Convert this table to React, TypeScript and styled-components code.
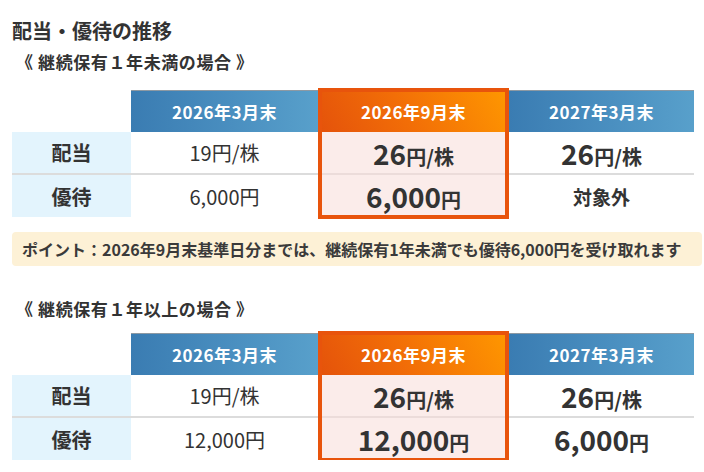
import React from "react";
import styled, { createGlobalStyle, css } from "styled-components";

const GlobalStyle = createGlobalStyle`
  html, body { margin: 0; padding: 0; background: #ffffff; }
  body {
    font-family: "Noto Sans CJK JP", "Noto Sans", sans-serif;
    color: #333333;
  }
`;

type Value =
  | { kind: "plain"; text: string }
  | { kind: "big"; num: string; unit: string }
  | { kind: "bold"; text: string };

interface Row {
  label: string;
  values: Value[];
}

interface Section {
  title: string;
  rows: Row[];
}

const HEADERS = ["2026年3月末", "2026年9月末", "2027年3月末"];
const HIGHLIGHT = 1;

const sections: Section[] = [
  {
    title: "《 継続保有１年未満の場合 》",
    rows: [
      {
        label: "配当",
        values: [
          { kind: "plain", text: "19円/株" },
          { kind: "big", num: "26", unit: "円/株" },
          { kind: "big", num: "26", unit: "円/株" },
        ],
      },
      {
        label: "優待",
        values: [
          { kind: "plain", text: "6,000円" },
          { kind: "big", num: "6,000", unit: "円" },
          { kind: "bold", text: "対象外" },
        ],
      },
    ],
  },
  {
    title: "《 継続保有１年以上の場合 》",
    rows: [
      {
        label: "配当",
        values: [
          { kind: "plain", text: "19円/株" },
          { kind: "big", num: "26", unit: "円/株" },
          { kind: "big", num: "26", unit: "円/株" },
        ],
      },
      {
        label: "優待",
        values: [
          { kind: "plain", text: "12,000円" },
          { kind: "big", num: "12,000", unit: "円" },
          { kind: "big", num: "6,000", unit: "円" },
        ],
      },
    ],
  },
];

const Page = styled.div`
  width: 704px;
  box-sizing: border-box;
  padding: 16px 2px 0 12px;
`;

const Title = styled.h1`
  margin: 0;
  font-size: 20px;
  line-height: 30px;
  font-weight: 700;
  color: #333333;
`;

const Subtitle = styled.h2<{ $gap: number }>`
  margin: ${(p) => p.$gap}px 0 0 4px;
  font-size: 17px;
  line-height: 24px;
  font-weight: 700;
  letter-spacing: 0.6px;
  color: #333333;
`;

const Table = styled.div<{ $gap: number }>`
  position: relative;
  margin-top: ${(p) => p.$gap}px;
  width: 682px;
  display: grid;
  grid-template-columns: 119px 187px 191px 185px;
  grid-template-rows: 42px 43px 42px;
`;

const Corner = styled.div`
  background: #ffffff;
`;

const HeadCell = styled.div<{ $hot?: boolean }>`
  display: flex;
  align-items: center;
  justify-content: center;
  color: #ffffff;
  font-size: 17px;
  font-weight: 700;
  letter-spacing: 0.5px;
  box-sizing: border-box;
  ${(p) =>
    p.$hot
      ? css`
          background: linear-gradient(60deg, #e4520b 0%, #f26e07 45%, #ff9800 100%);
        `
      : css`
          border-top: 1px solid #8d99a3;
          background: linear-gradient(to right, #3a7cb2 0%, #4a8fc0 55%, #58a0cb 100%);
        `}
`;

const LabelCell = styled.div<{ $sep?: boolean }>`
  display: flex;
  align-items: center;
  justify-content: center;
  background: #e3f4fd;
  font-size: 20px;
  font-weight: 700;
  color: #333333;
  box-sizing: border-box;
  ${(p) => p.$sep && css`border-bottom: 2px solid #dcdcdc;`}
`;

const ValueCell = styled.div<{ $hot?: boolean; $sep?: boolean }>`
  display: flex;
  align-items: center;
  justify-content: center;
  box-sizing: border-box;
  background: ${(p) => (p.$hot ? "#fbecea" : "#ffffff")};
  ${(p) =>
    p.$sep &&
    css`
      border-bottom: 2px solid ${p.$hot ? "#ecdcda" : "#dcdcdc"};
    `}
`;

const Plain = styled.span`
  font-size: 20px;
  font-weight: 400;
  color: #333333;
`;

const BoldText = styled.span`
  font-size: 19px;
  font-weight: 700;
  color: #333333;
`;

const Big = styled.span`
  display: inline-flex;
  align-items: baseline;
  font-weight: 700;
  color: #333333;
`;

const Num = styled.span`
  font-size: 28px;
`;

const Unit = styled.span`
  font-size: 20px;
`;

const HotFrame = styled.div`
  position: absolute;
  left: 306px;
  top: -2px;
  bottom: -2px;
  width: 191px;
  box-sizing: border-box;
  border: 4px solid #e8540c;
  pointer-events: none;
`;

const Note = styled.div`
  margin-top: 15px;
  width: 690px;
  height: 34px;
  box-sizing: border-box;
  padding: 0 10px;
  border-radius: 4px;
  background: #fdf1d6;
  display: flex;
  align-items: center;
  font-size: 16px;
  font-weight: 700;
  color: #3a3a3a;
  white-space: nowrap;
`;

function renderValue(v: Value) {
  if (v.kind === "plain") return <Plain>{v.text}</Plain>;
  if (v.kind === "bold") return <BoldText>{v.text}</BoldText>;
  return (
    <Big>
      <Num>{v.num}</Num>
      <Unit>{v.unit}</Unit>
    </Big>
  );
}

function DataTable({ rows, gap }: { rows: Row[]; gap: number }) {
  return (
    <Table $gap={gap}>
      <Corner />
      {HEADERS.map((h, i) => (
        <HeadCell key={h} $hot={i === HIGHLIGHT}>
          {h}
        </HeadCell>
      ))}
      {rows.map((r, ri) => {
        const sep = ri < rows.length - 1;
        return (
          <React.Fragment key={r.label}>
            <LabelCell $sep={sep}>{r.label}</LabelCell>
            {r.values.map((v, vi) => (
              <ValueCell key={vi} $hot={vi === HIGHLIGHT} $sep={sep}>
                {renderValue(v)}
              </ValueCell>
            ))}
          </React.Fragment>
        );
      })}
      <HotFrame />
    </Table>
  );
}

export default function App() {
  return (
    <>
      <GlobalStyle />
      <Page>
        <Title>配当・優待の推移</Title>
        <Subtitle $gap={4}>{sections[0].title}</Subtitle>
        <DataTable rows={sections[0].rows} gap={16} />
        <Note>
          ポイント：2026年9月末基準日分までは、継続保有1年未満でも優待6,000円を受け取れます
        </Note>
        <Subtitle $gap={31}>{sections[1].title}</Subtitle>
        <DataTable rows={sections[1].rows} gap={12} />
      </Page>
    </>
  );
}
